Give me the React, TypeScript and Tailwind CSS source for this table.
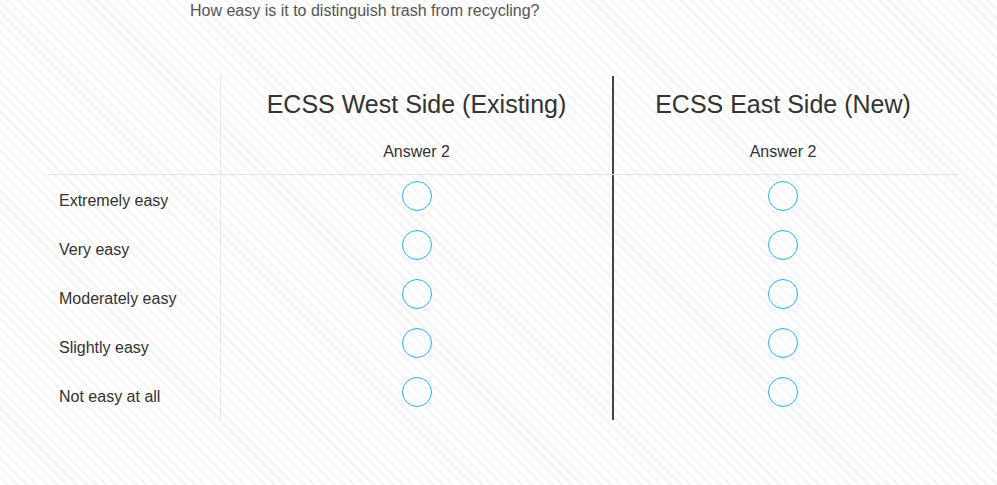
import React from 'react';

const rows = ['Extremely easy', 'Very easy', 'Moderately easy', 'Slightly easy', 'Not easy at all'];

const Radio = () => (
  <span className="block w-[30px] h-[30px] rounded-full border-[1.5px] border-[#22b2f2] bg-white/40" />
);

export default function App() {
  return (
    <div
      className="w-[997px] h-[485px] overflow-hidden text-[#333] bg-[repeating-linear-gradient(45deg,#ffffff_0px,#ffffff_4px,#f6f6f6_4px,#f6f6f6_7px)]"
      style={{ fontFamily: '"Liberation Sans", Arial, sans-serif' }}
    >
      <p className="pl-[190px] pt-[1px] text-[16px] leading-[19px] text-[#555]">
        How easy is it to distinguish trash from recycling?
      </p>

      <div className="ml-[47px] mt-[56px] w-[912px]">
        {/* header */}
        <div className="flex h-[99px] border-b border-[#e2e2e2]">
          <div className="w-[174px] shrink-0 border-r border-[#e6e6e6]" />
          <div className="w-[393px] shrink-0 border-r-2 border-[#444] flex flex-col items-center">
            <div className="mt-[14px] text-[25px] leading-[29px]">ECSS West Side (Existing)</div>
            <div className="mt-[23px] text-[16px] leading-[19px]">Answer 2</div>
          </div>
          <div className="w-[338px] shrink-0 flex flex-col items-center">
            <div className="mt-[14px] text-[25px] leading-[29px]">ECSS East Side (New)</div>
            <div className="mt-[23px] text-[16px] leading-[19px]">Answer 2</div>
          </div>
        </div>

        {/* rows */}
        <div className="pb-[3px] flex flex-col">
          {rows.map(r => (
            <div key={r} className="flex h-[49px]">
              <div className="w-[174px] shrink-0 border-r border-[#e6e6e6] pl-[12px] flex items-center pt-[2px] text-[16px]">
                {r}
              </div>
              <div className="w-[393px] shrink-0 border-r-2 border-[#444] flex justify-center pt-[6px]">
                <Radio />
              </div>
              <div className="w-[338px] shrink-0 flex justify-center pt-[6px]">
                <Radio />
              </div>
            </div>
          ))}
        </div>
      </div>
    </div>
  );
}
